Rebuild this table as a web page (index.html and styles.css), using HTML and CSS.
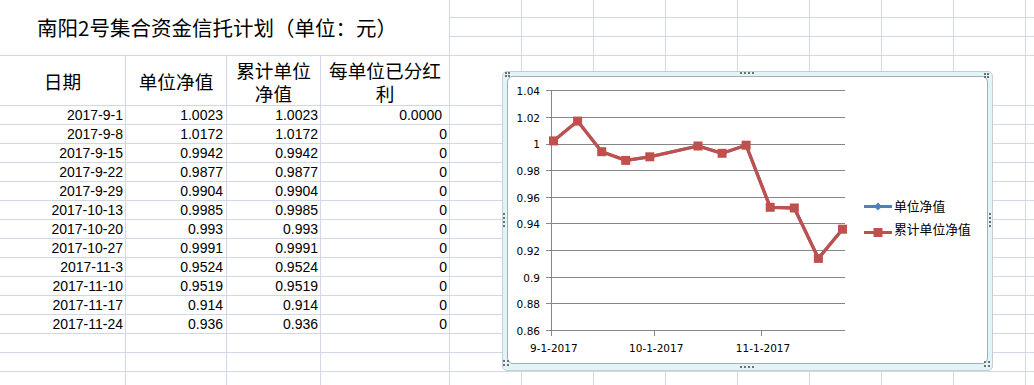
FILE: index.html
```html
<!DOCTYPE html>
<html lang="zh-CN">
<head>
<meta charset="utf-8">
<title>南阳2号集合资金信托计划</title>
<link rel="stylesheet" href="styles.css">
</head>
<body class="page">
<div class="sheet">
  <div class="title">南阳2号集合资金信托计划（单位：元）</div>
  <div></div><div></div><div></div><div></div><div></div><div></div><div></div><div></div><div></div>
  <div></div><div></div><div></div><div></div><div></div><div></div><div></div><div></div><div></div>
  <div></div><div></div><div></div><div></div><div></div><div></div><div></div><div></div><div></div>

  <div class="hd">日期</div><div class="hd">单位净值</div><div class="hd">累计单位<br>净值</div><div class="hd">每单位已分红<br>利</div>
  <div></div><div></div><div></div><div></div><div></div><div></div><div></div><div></div><div></div>

  <div class="num">2017-9-1</div><div class="num nb">1.0023</div><div class="num">1.0023</div><div class="num nd">0.0000</div>
  <div></div><div></div><div></div><div></div><div></div><div></div><div></div><div></div><div></div>
  <div class="num">2017-9-8</div><div class="num nb">1.0172</div><div class="num">1.0172</div><div class="num">0</div>
  <div></div><div></div><div></div><div></div><div></div><div></div><div></div><div></div><div></div>
  <div class="num">2017-9-15</div><div class="num nb">0.9942</div><div class="num">0.9942</div><div class="num">0</div>
  <div></div><div></div><div></div><div></div><div></div><div></div><div></div><div></div><div></div>
  <div class="num">2017-9-22</div><div class="num nb">0.9877</div><div class="num">0.9877</div><div class="num">0</div>
  <div></div><div></div><div></div><div></div><div></div><div></div><div></div><div></div><div></div>
  <div class="num">2017-9-29</div><div class="num nb">0.9904</div><div class="num">0.9904</div><div class="num">0</div>
  <div></div><div></div><div></div><div></div><div></div><div></div><div></div><div></div><div></div>
  <div class="num">2017-10-13</div><div class="num nb">0.9985</div><div class="num">0.9985</div><div class="num">0</div>
  <div></div><div></div><div></div><div></div><div></div><div></div><div></div><div></div><div></div>
  <div class="num">2017-10-20</div><div class="num nb">0.993</div><div class="num">0.993</div><div class="num">0</div>
  <div></div><div></div><div></div><div></div><div></div><div></div><div></div><div></div><div></div>
  <div class="num">2017-10-27</div><div class="num nb">0.9991</div><div class="num">0.9991</div><div class="num">0</div>
  <div></div><div></div><div></div><div></div><div></div><div></div><div></div><div></div><div></div>
  <div class="num">2017-11-3</div><div class="num nb">0.9524</div><div class="num">0.9524</div><div class="num">0</div>
  <div></div><div></div><div></div><div></div><div></div><div></div><div></div><div></div><div></div>
  <div class="num">2017-11-10</div><div class="num nb">0.9519</div><div class="num">0.9519</div><div class="num">0</div>
  <div></div><div></div><div></div><div></div><div></div><div></div><div></div><div></div><div></div>
  <div class="num">2017-11-17</div><div class="num nb">0.914</div><div class="num">0.914</div><div class="num">0</div>
  <div></div><div></div><div></div><div></div><div></div><div></div><div></div><div></div><div></div>
  <div class="num">2017-11-24</div><div class="num nb">0.936</div><div class="num">0.936</div><div class="num">0</div>
  <div></div><div></div><div></div><div></div><div></div><div></div><div></div><div></div><div></div>

  <div></div><div></div><div></div><div></div>
  <div></div><div></div><div></div><div></div><div></div><div></div><div></div><div></div><div></div>
  <div></div><div></div><div></div><div></div>
  <div></div><div></div><div></div><div></div><div></div><div></div><div></div><div></div><div></div>
  <div></div><div></div><div></div><div></div>
  <div></div><div></div><div></div><div></div><div></div><div></div><div></div><div></div><div></div>
</div>

<div class="chart">
  <div class="chart-panel"></div>
  <svg class="chart-svg" viewBox="502 71 491 300" xmlns="http://www.w3.org/2000/svg">
    <g class="grid" stroke="#868686" stroke-width="1" shape-rendering="crispEdges">
      <line x1="551" y1="90.5" x2="845" y2="90.5"/>
      <line x1="551" y1="117.5" x2="845" y2="117.5"/>
      <line x1="551" y1="144.5" x2="845" y2="144.5"/>
      <line x1="551" y1="170.5" x2="845" y2="170.5"/>
      <line x1="551" y1="197.5" x2="845" y2="197.5"/>
      <line x1="551" y1="223.5" x2="845" y2="223.5"/>
      <line x1="551" y1="250.5" x2="845" y2="250.5"/>
      <line x1="551" y1="277.5" x2="845" y2="277.5"/>
      <line x1="551" y1="303.5" x2="845" y2="303.5"/>
      <line x1="546" y1="330.5" x2="845" y2="330.5"/>
      <line x1="551.5" y1="90" x2="551.5" y2="336"/>
      <line x1="546" y1="90.5" x2="551" y2="90.5"/>
      <line x1="546" y1="117.5" x2="551" y2="117.5"/>
      <line x1="546" y1="144.5" x2="551" y2="144.5"/>
      <line x1="546" y1="170.5" x2="551" y2="170.5"/>
      <line x1="546" y1="197.5" x2="551" y2="197.5"/>
      <line x1="546" y1="223.5" x2="551" y2="223.5"/>
      <line x1="546" y1="250.5" x2="551" y2="250.5"/>
      <line x1="546" y1="277.5" x2="551" y2="277.5"/>
      <line x1="546" y1="303.5" x2="551" y2="303.5"/>
      <line x1="654.5" y1="330" x2="654.5" y2="336"/>
      <line x1="761.5" y1="330" x2="761.5" y2="336"/>
    </g>
    <g class="axis-label" text-anchor="end">
      <text x="540" y="95">1.04</text>
      <text x="540" y="121.5">1.02</text>
      <text x="540" y="148">1</text>
      <text x="540" y="174.5">0.98</text>
      <text x="540" y="201.5">0.96</text>
      <text x="540" y="228">0.94</text>
      <text x="540" y="254.5">0.92</text>
      <text x="540" y="281.5">0.9</text>
      <text x="540" y="307.5">0.88</text>
      <text x="540" y="334.5">0.86</text>
    </g>
    <g class="axis-label" text-anchor="middle">
      <text x="553.8" y="351.5">9-1-2017</text>
      <text x="656.2" y="351.5">10-1-2017</text>
      <text x="763" y="351.5">11-1-2017</text>
    </g>
    <polyline fill="none" stroke="#4F81BD" stroke-width="3" stroke-linejoin="round"
      points="553.5,140.9 577.6,121.1 601.7,151.7 625.7,160.4 649.8,156.8 698,146 722.1,153.3 746.1,145.2 770.2,207.3 794.3,208 818.4,258.4 842.5,229.2"/>
    <polyline fill="none" stroke="#C0504D" stroke-width="3.3" stroke-linejoin="round"
      points="553.5,140.9 577.6,121.1 601.7,151.7 625.7,160.4 649.8,156.8 698,146 722.1,153.3 746.1,145.2 770.2,207.3 794.3,208 818.4,258.4 842.5,229.2"/>
    <g fill="#C0504D">
      <rect x="549" y="136.4" width="9" height="9"/>
      <rect x="573.1" y="116.6" width="9" height="9"/>
      <rect x="597.2" y="147.2" width="9" height="9"/>
      <rect x="621.2" y="155.9" width="9" height="9"/>
      <rect x="645.3" y="152.3" width="9" height="9"/>
      <rect x="693.5" y="141.5" width="9" height="9"/>
      <rect x="717.6" y="148.8" width="9" height="9"/>
      <rect x="741.6" y="140.7" width="9" height="9"/>
      <rect x="765.7" y="202.8" width="9" height="9"/>
      <rect x="789.8" y="203.5" width="9" height="9"/>
      <rect x="813.9" y="253.9" width="9" height="9"/>
      <rect x="838" y="224.7" width="9" height="9"/>
    </g>
    <g class="legend">
      <line x1="864" y1="206.5" x2="892" y2="206.5" stroke="#4F81BD" stroke-width="3"/>
      <polygon points="878,202.5 882,206.5 878,210.5 874,206.5" fill="#4F81BD"/>
      <text class="legend-label" x="894" y="210.5">单位净值</text>
      <line x1="864" y1="232.5" x2="892" y2="232.5" stroke="#C0504D" stroke-width="3"/>
      <rect x="873.5" y="228" width="9" height="9" fill="#C0504D"/>
      <text class="legend-label" x="894" y="234">累计单位净值</text>
    </g>
    <g class="handles" fill="#707070">
      <rect x="505" y="72" width="2" height="2"/><rect x="508" y="72" width="2" height="2"/>
      <rect x="505" y="75" width="2" height="2"/><rect x="508" y="75" width="2" height="2"/>
      <rect x="984" y="73" width="2" height="2"/><rect x="987" y="73" width="2" height="2"/>
      <rect x="984" y="76" width="2" height="2"/><rect x="987" y="76" width="2" height="2"/>
      <rect x="503" y="360" width="2" height="2"/><rect x="507" y="360" width="2" height="2"/>
      <rect x="503" y="364" width="2" height="2"/><rect x="507" y="364" width="2" height="2"/>
      <rect x="984" y="361" width="2" height="2"/><rect x="988" y="361" width="2" height="2"/>
      <rect x="984" y="365" width="2" height="2"/><rect x="988" y="365" width="2" height="2"/>
      <rect x="740" y="72" width="2" height="2"/><rect x="744" y="72" width="2" height="2"/>
      <rect x="748" y="72" width="2" height="2"/><rect x="752" y="72" width="2" height="2"/>
      <rect x="740" y="366" width="2" height="2"/><rect x="744" y="366" width="2" height="2"/>
      <rect x="748" y="366" width="2" height="2"/><rect x="752" y="366" width="2" height="2"/>
      <rect x="503" y="213" width="2" height="2"/><rect x="503" y="217" width="2" height="2"/>
      <rect x="503" y="221" width="2" height="2"/><rect x="503" y="225" width="2" height="2"/>
      <rect x="989" y="213" width="2" height="2"/><rect x="989" y="217" width="2" height="2"/>
      <rect x="989" y="221" width="2" height="2"/><rect x="989" y="225" width="2" height="2"/>
    </g>
  </svg>
</div>
</body>
</html>
```

FILE: styles.css
```css
html, .page {
  margin: 0;
  padding: 0;
  overflow: hidden;
  background: #fff;
}

.sheet {
  display: grid;
  grid-template-columns: 126px 101px 94px 129px repeat(9, 72px);
  grid-template-rows: 18px 19px 19px 50px repeat(15, 19px);
  width: 1098px;
  color: #000;
}

.sheet > div {
  box-sizing: border-box;
  border-right: 1px solid #D0D7E5;
  border-bottom: 1px solid #D0D7E5;
  overflow: hidden;
}

.title {
  grid-column: 1 / 5;
  grid-row: 1 / 4;
  display: flex;
  align-items: center;
  padding-left: 37px;
  font-family: "Noto Sans CJK SC", sans-serif;
  font-size: 20.5px;
  line-height: 1.2;
  white-space: nowrap;
}

.hd {
  display: flex;
  align-items: center;
  justify-content: center;
  text-align: center;
  font-family: "Noto Sans CJK SC", sans-serif;
  font-size: 18.67px;
  line-height: 23px;
}

.num {
  font-family: "Liberation Sans", Arial, sans-serif;
  font-size: 14px;
  line-height: 18px;
  text-align: right;
  padding-right: 2px;
  white-space: nowrap;
}

.nb {
  padding-right: 3px;
}

.nd {
  padding-right: 7px;
}

.chart {
  position: absolute;
  left: 502px;
  top: 71px;
  width: 491px;
  height: 300px;
  box-sizing: border-box;
  border: 1px solid #C4D0D4;
  border-radius: 5px;
  background: #E1F4F7;
  padding: 4px 4px 6px 4px;
}

.chart-panel {
  box-sizing: border-box;
  height: 100%;
  border: 1px solid #A7ADB0;
  border-radius: 6px;
  background: #fff;
}

.chart-svg {
  position: absolute;
  left: -1px;
  top: -1px;
  width: 491px;
  height: 300px;
}

.axis-label {
  font-family: "DejaVu Sans", sans-serif;
  font-size: 10.5px;
  fill: #000;
}

.legend-label {
  font-family: "Noto Sans CJK SC", sans-serif;
  font-size: 12.8px;
  fill: #000;
}
```
